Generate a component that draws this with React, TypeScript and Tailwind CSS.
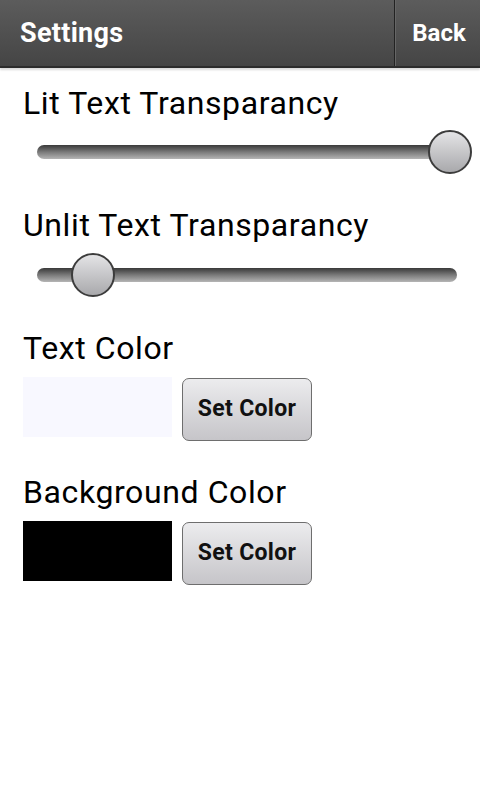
import React from "react";

function Slider({ pos }: { pos: number }) {
  return (
    <div className="relative ml-[37px] mr-[23px] h-[44px]">
      <div className="absolute left-0 right-0 top-[15px] h-[14px] rounded-full bg-gradient-to-b from-[#3a3a3a] via-[#7a7a7a] to-[#b5b5b5]" />
      <div
        className="absolute top-0 h-[44px] w-[44px] rounded-full border-2 border-[#3c3c3c] bg-gradient-to-b from-[#e4e4e6] to-[#a9a9ac]"
        style={{ left: `${pos}px`, transform: "translateX(-50%)" }}
      />
    </div>
  );
}

function ColorRow({ color }: { color: string }) {
  return (
    <div className="flex items-start gap-[10px] px-[23px]">
      <div className={`h-[60px] w-[149px] ${color}`} />
      <button className="mt-[1px] h-[63px] w-[130px] rounded-[7px] border border-[#6e6e6e] bg-gradient-to-b from-[#ececee] to-[#c6c5c9] text-[23px] font-bold tracking-[0.3px] text-[#111]">
        Set Color
      </button>
    </div>
  );
}

function Label({ children, className }: { children: React.ReactNode; className: string }) {
  return (
    <div className={`px-[23px] text-[32px] leading-[44px] tracking-[0.6px] text-black ${className}`}>{children}</div>
  );
}

export default function App() {
  return (
    <div className="h-[800px] w-[480px] bg-white" style={{ fontFamily: "Roboto, 'Noto Sans', sans-serif" }}>
      <div className="flex h-[68px] border-b-2 border-[#2c2c2c] bg-gradient-to-b from-[#5c5c5c] to-[#454545] text-white shadow-[0_2px_2px_rgba(0,0,0,0.15)]">
        <div className="flex flex-1 items-center pl-[20px] text-[27px] font-bold tracking-[0.3px]">Settings</div>
        <div className="w-[2px] bg-[#222] border-r border-[#666]" />
        <div className="flex w-[84px] items-center justify-center pl-[2px] text-[24px] font-bold">Back</div>
      </div>
      <div className="pt-[13px]">
        <Label className="">Lit Text Transparancy</Label>
        <div className="mt-[5px]">
          <Slider pos={413} />
        </div>
        <Label className="mt-[29px]">Unlit Text Transparancy</Label>
        <div className="mt-[6px]">
          <Slider pos={56} />
        </div>
        <Label className="mt-[29px]">Text Color</Label>
        <div className="mt-[7px]">
          <ColorRow color="bg-[#f8f8ff]" />
        </div>
        <Label className="mt-[29px]">Background Color</Label>
        <div className="mt-[7px]">
          <ColorRow color="bg-black" />
        </div>
      </div>
    </div>
  );
}
